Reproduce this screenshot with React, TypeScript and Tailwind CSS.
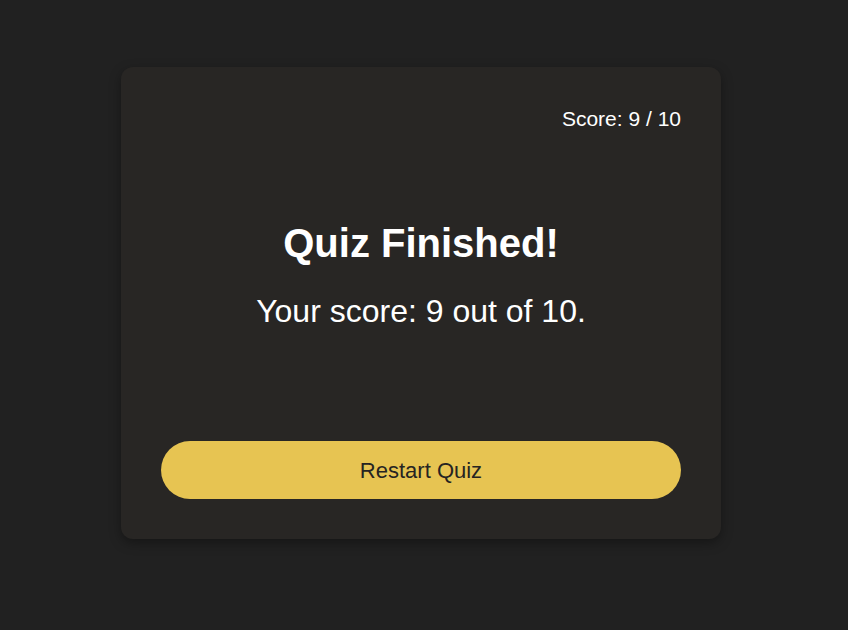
import React from 'react';

const App = () => {
  const score = 9;
  const total = 10;

  return (
    <div className="min-h-screen bg-[#212121] pt-[67px] font-['Liberation_Sans',Arial,sans-serif]">
      <div className="ml-[121px] flex w-[600px] flex-col rounded-xl bg-[#282624] p-10 shadow-[0_4px_12px_rgba(0,0,0,0.35)]">
        <div className="pt-[1px] text-right text-[21px] leading-none text-white">
          Score: {score} / {total}
        </div>

        <h1 className="mt-[94px] text-center text-[40px] font-bold leading-none text-white">
          Quiz Finished!
        </h1>
        <p className="mt-[32px] text-center text-[32px] leading-none text-white">
          Your score: {score} out of {total}.
        </p>

        <button className="mt-[114px] h-[58px] w-full rounded-full bg-[#e7c452] text-[22px] text-[#262422]">
          Restart Quiz
        </button>
      </div>
    </div>
  );
};

export default App;
